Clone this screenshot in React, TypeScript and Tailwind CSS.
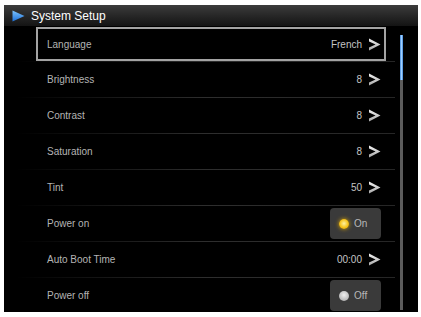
import React from "react";

type Row =
  | { label: string; kind: "value"; value: string }
  | { label: string; kind: "toggle"; on: boolean };

const rows: Row[] = [
  { label: "Brightness", kind: "value", value: "8" },
  { label: "Contrast", kind: "value", value: "8" },
  { label: "Saturation", kind: "value", value: "8" },
  { label: "Tint", kind: "value", value: "50" },
  { label: "Power on", kind: "toggle", on: true },
  { label: "Auto Boot Time", kind: "value", value: "00:00" },
  { label: "Power off", kind: "toggle", on: false },
];

function Chevron() {
  return (
    <svg width="13" height="13" viewBox="0 0 13 13" className="shrink-0">
      <defs>
        <linearGradient id="chev" x1="0" y1="0" x2="0" y2="1">
          <stop offset="0" stopColor="#f2f2f2" />
          <stop offset="1" stopColor="#a8a8a8" />
        </linearGradient>
      </defs>
      <path d="M1 0.5 L12.5 6.5 L1 12.5 L1 9.6 L7.6 6.5 L1 3.4 Z" fill="url(#chev)" />
    </svg>
  );
}

function Value({ value }: { value: string }) {
  return (
    <div className="flex items-center gap-[6px]">
      <span className="text-[10px] text-[#c4c4c4]">{value}</span>
      <Chevron />
    </div>
  );
}

function Toggle({ on }: { on: boolean }) {
  return (
    <div className="flex h-[31px] w-[51px] items-center gap-[5px] rounded-[4px] bg-[#3a3a3a] pl-[9px]">
      <span
        className={
          on
            ? "h-[10px] w-[10px] rounded-full bg-[radial-gradient(circle_at_50%_45%,#fff2a0_0%,#f5c21a_55%,#c98d00_100%)] shadow-[0_0_4px_#e0a800]"
            : "h-[10px] w-[10px] rounded-full bg-[radial-gradient(circle_at_50%_40%,#f0f0f0_0%,#b8b8b8_70%,#8a8a8a_100%)]"
        }
      />
      <span className="text-[10px] text-[#b8b8b8]">{on ? "On" : "Off"}</span>
    </div>
  );
}

export default function App() {
  return (
    <div
      className="h-[317px] w-[421px] overflow-hidden bg-white pb-[5px] pl-[4px] pr-[3px] pt-[5px]"
      style={{ fontFamily: '"Liberation Sans", Arial, sans-serif' }}
    >
      <div className="flex h-full w-full flex-col overflow-hidden bg-black">
        {/* title bar */}
        <div className="flex h-[21px] shrink-0 items-center gap-[6px] bg-gradient-to-b from-[#3c3c3c] to-[#141414] pl-[8px]">
          <svg width="13" height="12" viewBox="0 0 13 12">
            <defs>
              <linearGradient id="tri" x1="0" y1="0" x2="0" y2="1">
                <stop offset="0" stopColor="#7cc4ff" />
                <stop offset="1" stopColor="#1d6fd6" />
              </linearGradient>
            </defs>
            <path d="M0.5 0.5 L12.5 6 L0.5 11.5 Z" fill="url(#tri)" />
          </svg>
          <span className="text-[12px] leading-none text-white">System Setup</span>
        </div>

        <div className="flex flex-1">
          {/* list */}
          <div className="ml-[11px] flex w-[380px] flex-col">
            <div className="ml-[21px] mr-[9px] mt-[1px] flex h-[34px] shrink-0 items-center justify-between border-2 border-[#a3a3a3] pl-[9px] pr-[3px]">
              <span className="text-[10px] text-[#b4b4b4]">Language</span>
              <Value value="French" />
            </div>
            {rows.map((r) => (
              <div key={r.label} className="flex h-[36px] shrink-0 flex-col">
                <div className="h-px bg-gradient-to-r from-transparent via-[#2e2e2e] to-[#262626]" />
                <div className="flex flex-1 items-center justify-between pl-[32px] pr-[14px]">
                  <span className="text-[10px] text-[#b4b4b4]">{r.label}</span>
                  {r.kind === "value" ? <Value value={r.value} /> : <Toggle on={r.on} />}
                </div>
              </div>
            ))}
          </div>

          {/* scrollbar */}
          <div className="ml-[5px] mt-[9px] flex h-[275px] w-[3px] flex-col bg-[#5c5c5c]">
            <div className="h-[45px] w-full bg-gradient-to-r from-[#3f86d8] via-[#9fd0ff] to-[#3f86d8]" />
          </div>
        </div>
      </div>
    </div>
  );
}
